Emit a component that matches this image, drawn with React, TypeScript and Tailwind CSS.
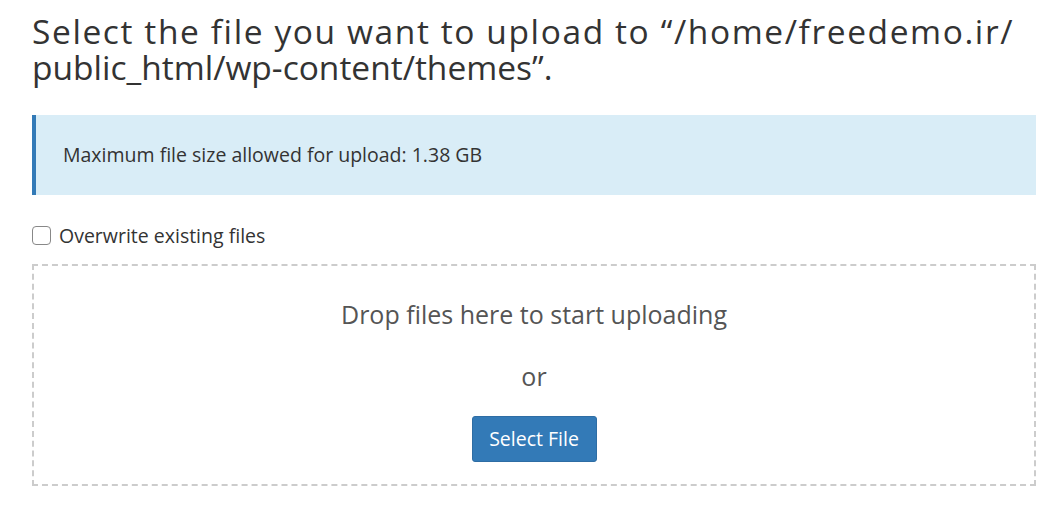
export default function App() {
  return (
    <div className="min-h-[516px] bg-white pl-[32px] pr-[24px] pt-[13px] font-['Open_Sans',sans-serif] text-[#333]">
      <h1 className="text-[33.5px] font-normal leading-[36px]">
        <span className="tracking-[1.6px]">Select the file you want to upload to “/home/freedemo.ir/</span>
        <br />
        public_html/wp-content/themes”.
      </h1>

      <div className="mt-[30px] flex h-[80px] items-center border-l-4 border-[#337ab7] bg-[#d9edf7] pl-[27px] text-[19.5px] text-[#333]">
        Maximum file size allowed for upload: 1.38 GB
      </div>

      <label className="mt-[27px] flex items-center gap-[8px] text-[19.5px] leading-[27px]">
        <input
          type="checkbox"
          className="h-[19px] w-[19px] shrink-0 appearance-none rounded-[4px] border border-[#888] bg-white"
        />
        Overwrite existing files
      </label>

      <div className="mt-[15px] flex h-[222px] flex-col items-center border-2 border-dashed border-[#ccc] pt-[33px]">
        <p className="text-[25px] leading-[30px] text-[#555]">Drop files here to start uploading</p>
        <p className="mt-[32px] text-[25px] leading-[30px] text-[#555]">or</p>
        <button className="mt-[25px] h-[46px] w-[125px] rounded-[3px] border border-[#2e6da4] bg-[#337ab7] text-[19.5px] text-white">
          Select File
        </button>
      </div>
    </div>
  );
}
